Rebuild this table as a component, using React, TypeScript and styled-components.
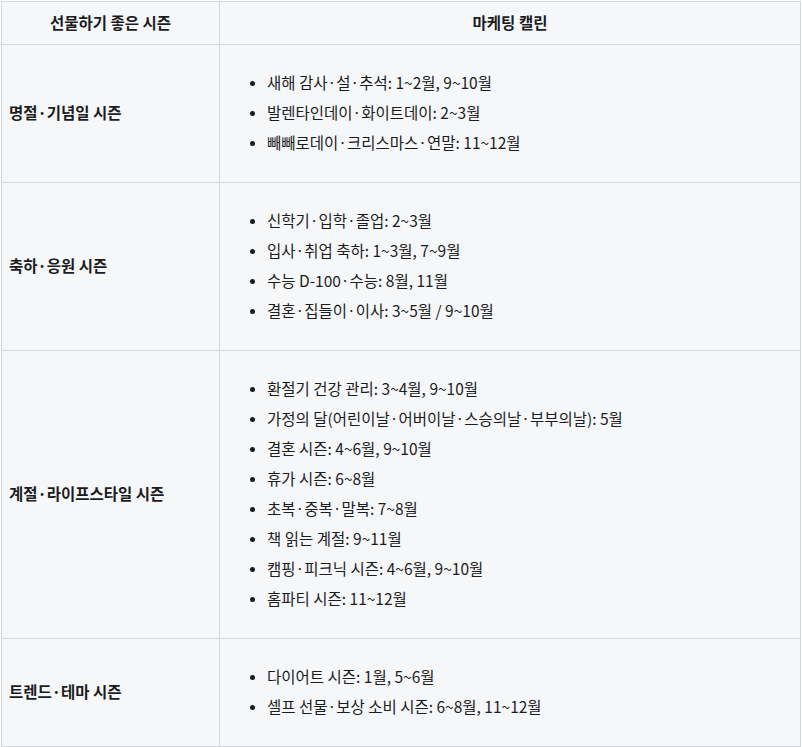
import React from "react";
import styled, { createGlobalStyle } from "styled-components";

const Global = createGlobalStyle`
  html, body { margin: 0; padding: 0; background: #ffffff; }
  body { font-family: "Noto Sans CJK KR", "Noto Sans", sans-serif; color: #1b1c1e; }
`;

const Wrap = styled.div`
  padding: 1px 1px 0 1px;
`;

const Table = styled.table`
  width: 800px;
  border-collapse: collapse;
  background: #f6f7f9;
  font-size: 15.5px;
  table-layout: fixed;
`;

const HeadCell = styled.th<{ $w?: number }>`
  border: 1px solid #d4d7dc;
  padding: 9px 7px 11px;
  line-height: 22px;
  font-weight: 700;
  text-align: center;
  width: ${(p) => (p.$w ? `${p.$w}px` : "auto")};
`;

const LabelCell = styled.td`
  border: 1px solid #d4d7dc;
  padding: 6px 7px 10px;
  font-weight: 700;
  vertical-align: middle;
  line-height: 22px;
`;

const ListCell = styled.td`
  border: 1px solid #d4d7dc;
  padding: 6px 7px 10px;
  vertical-align: middle;
`;

const List = styled.ul`
  margin: 15.5px 0;
  padding-left: 40px;
  list-style: disc;
`;

const Item = styled.li`
  line-height: 30px;
  &::marker { font-size: 13px; }
`;

const rows: { label: string; items: string[] }[] = [
  {
    label: "명절·기념일 시즌",
    items: [
      "새해 감사·설·추석: 1~2월, 9~10월",
      "발렌타인데이·화이트데이: 2~3월",
      "빼빼로데이·크리스마스·연말: 11~12월",
    ],
  },
  {
    label: "축하·응원 시즌",
    items: [
      "신학기·입학·졸업: 2~3월",
      "입사·취업 축하: 1~3월, 7~9월",
      "수능 D-100·수능: 8월, 11월",
      "결혼·집들이·이사: 3~5월 / 9~10월",
    ],
  },
  {
    label: "계절·라이프스타일 시즌",
    items: [
      "환절기 건강 관리: 3~4월, 9~10월",
      "가정의 달(어린이날·어버이날·스승의날·부부의날): 5월",
      "결혼 시즌: 4~6월, 9~10월",
      "휴가 시즌: 6~8월",
      "초복·중복·말복: 7~8월",
      "책 읽는 계절: 9~11월",
      "캠핑·피크닉 시즌: 4~6월, 9~10월",
      "홈파티 시즌: 11~12월",
    ],
  },
  {
    label: "트렌드·테마 시즌",
    items: ["다이어트 시즌: 1월, 5~6월", "셀프 선물·보상 소비 시즌: 6~8월, 11~12월"],
  },
];

export default function App() {
  return (
    <Wrap>
      <Global />
      <Table>
        <thead>
          <tr>
            <HeadCell $w={203}>선물하기 좋은 시즌</HeadCell>
            <HeadCell>마케팅 캘린</HeadCell>
          </tr>
        </thead>
        <tbody>
          {rows.map((r) => (
            <tr key={r.label}>
              <LabelCell>{r.label}</LabelCell>
              <ListCell>
                <List>
                  {r.items.map((it) => (
                    <Item key={it}>{it}</Item>
                  ))}
                </List>
              </ListCell>
            </tr>
          ))}
        </tbody>
      </Table>
    </Wrap>
  );
}
